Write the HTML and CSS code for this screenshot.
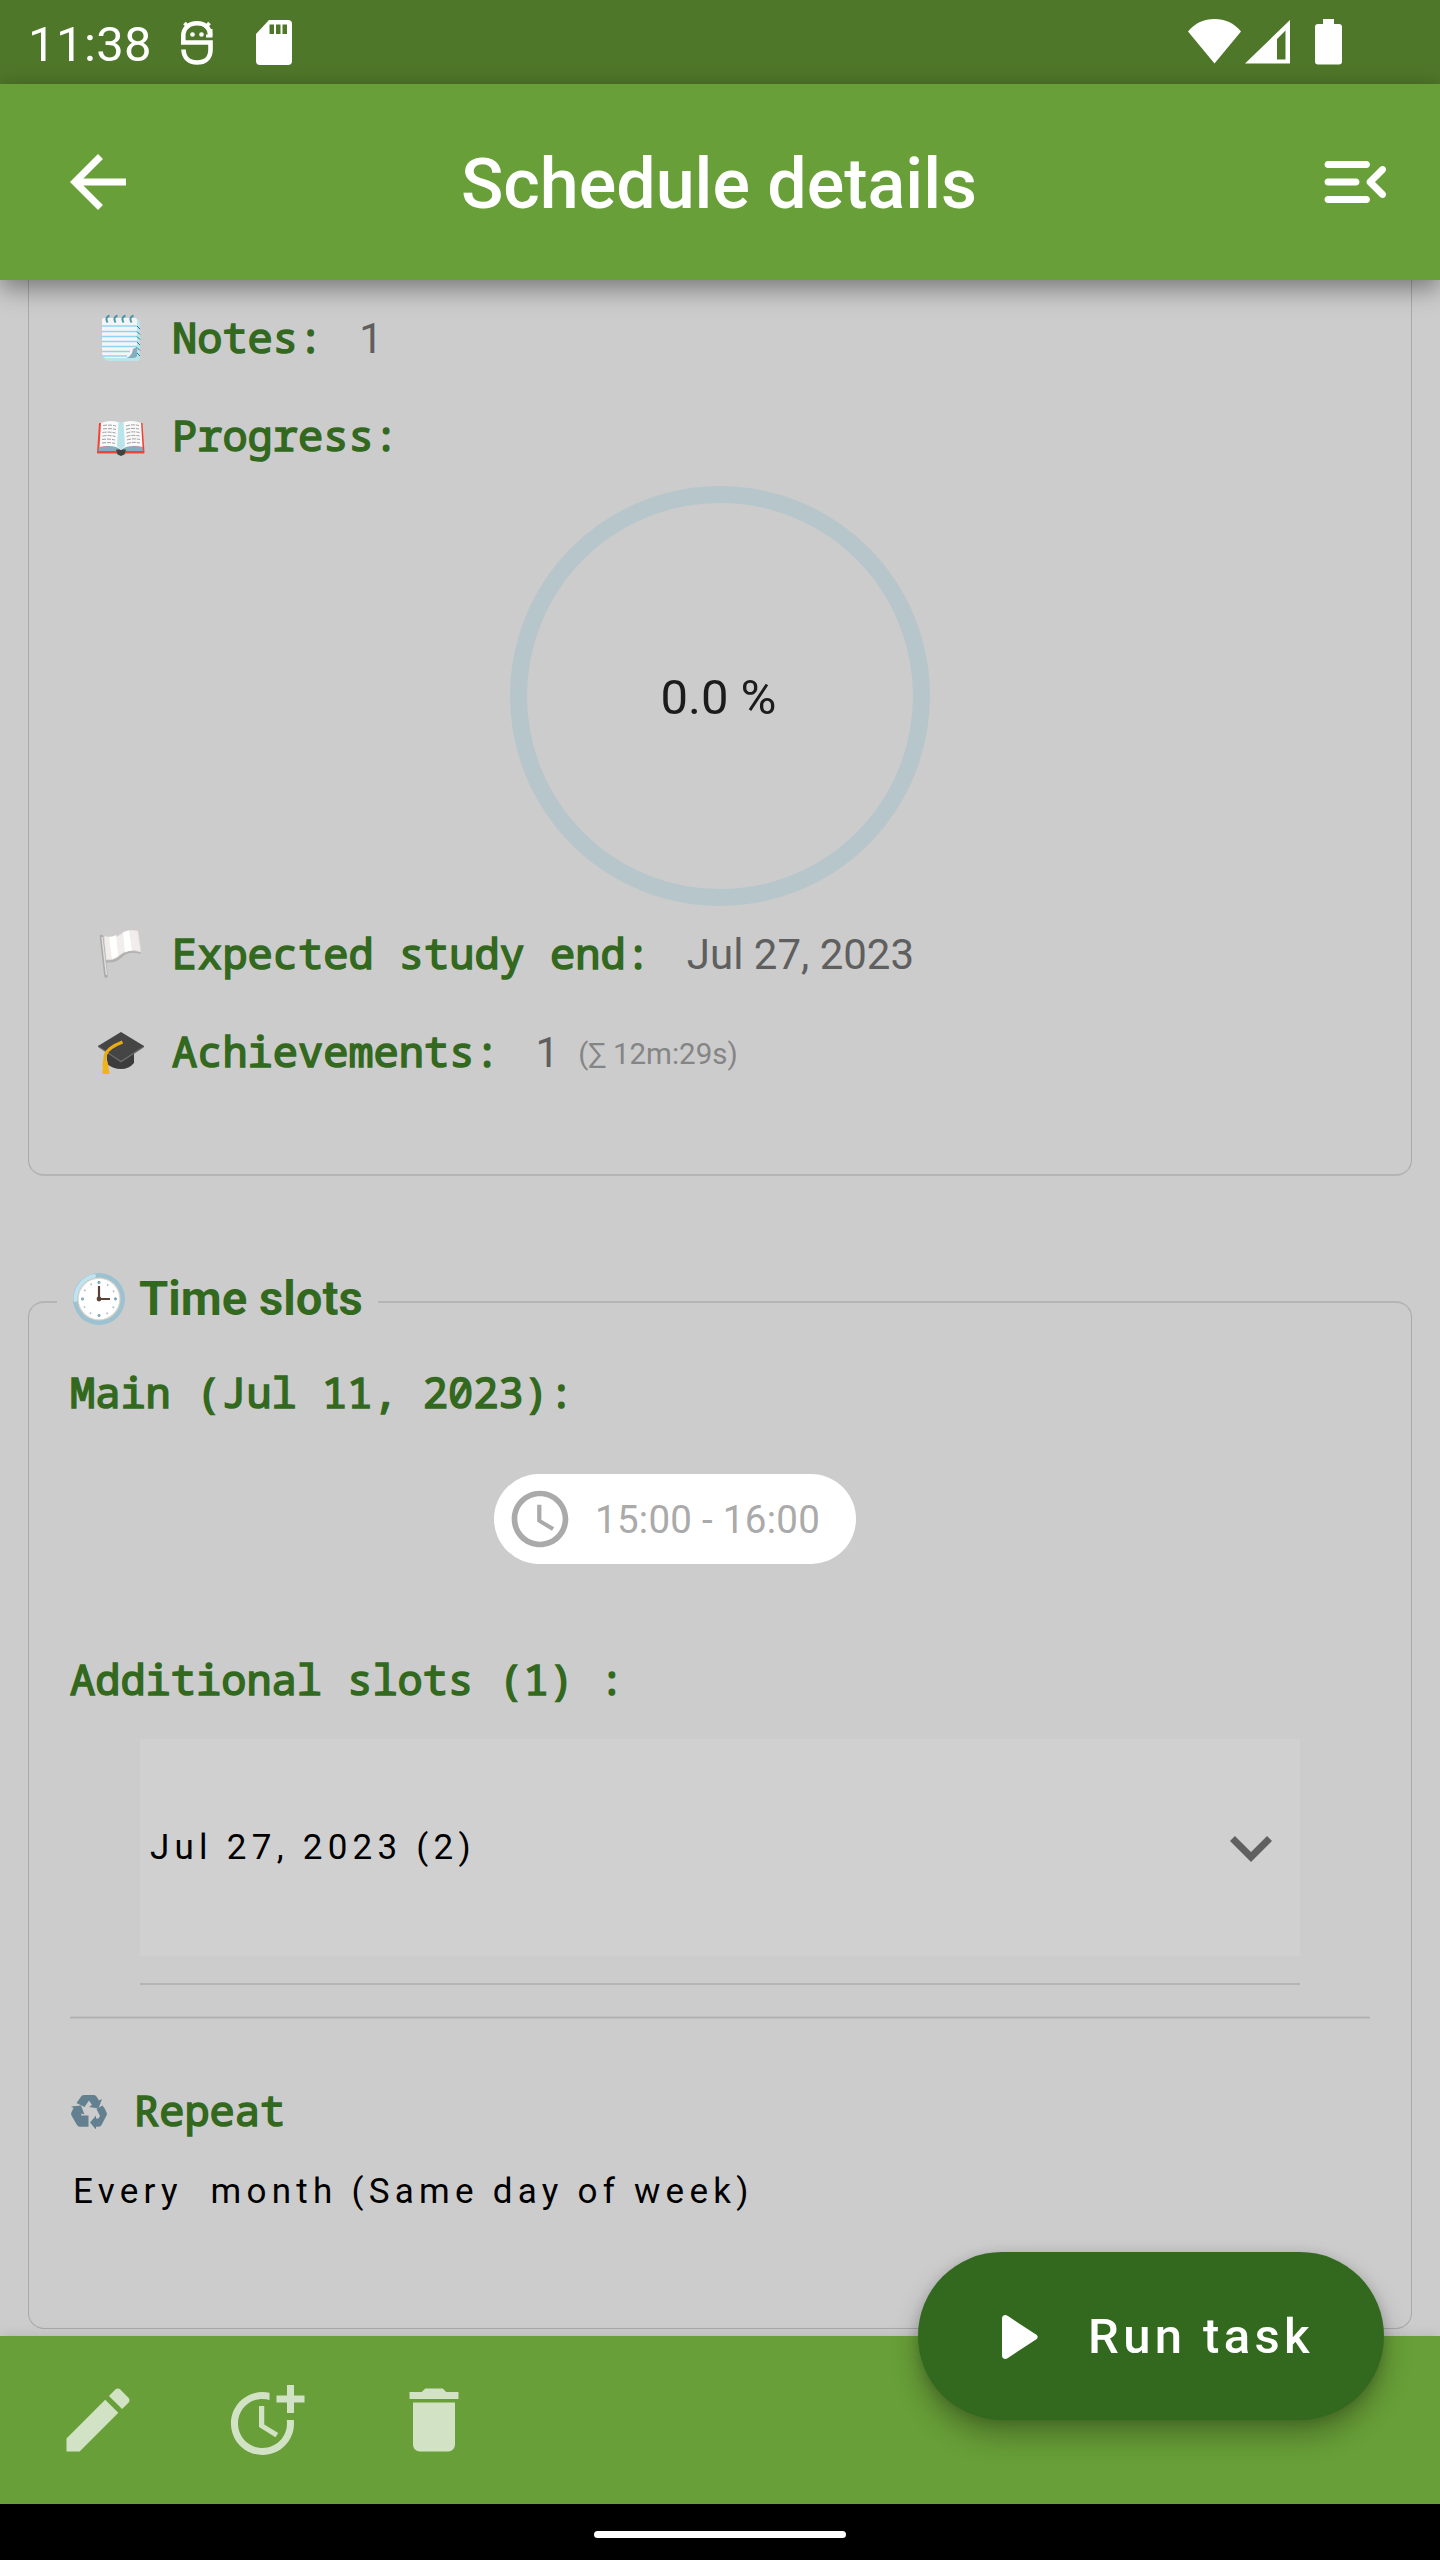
FILE: index.html
```html
<!DOCTYPE html>
<html lang="en">
<head>
<meta charset="utf-8">
<title>Schedule details</title>
<link rel="stylesheet" href="styles.css">
</head>
<body>
<div class="screen">
  <div class="status-bar">
    <span class="clock">11:38</span>
    <svg class="st-debug" width="32" height="46" viewBox="0 0 32 46" fill="none" stroke="#fff" stroke-width="4.600">
      <path d="M2.300 22.500V16C2.300 8 8 3.300 16 3.300S29 8 29.200 15.500M0 22.500H29.500V30C29.500 38 24 42.500 16 42.500S2.800 38 2.500 29.500"/>
      <path d="M3.500 3l4.500 5M28.500 3l-4.500 5" stroke-width="3.600"/><path d="M30 9v7H25" stroke-width="3"/>
      <circle cx="11.500" cy="14.500" r="2.300" fill="#fff" stroke="none"/><circle cx="20.500" cy="14.500" r="2.300" fill="#fff" stroke="none"/>
    </svg>
    <svg class="st-sd" width="36" height="45" viewBox="0 0 36 45">
      <path fill="#fff" fill-rule="evenodd" d="M13 0H32a4 4 0 0 1 4 4V41a4 4 0 0 1-4 4H4a4 4 0 0 1-4-4V14ZM13.500 4.500V14h4.500V4.500ZM20 4.500V14h4.500V4.500ZM26.500 4.500V14H31V4.500Z"/>
    </svg>
    <svg class="st-net" width="156" height="46" viewBox="0 0 156 46" fill="#fff">
      <path d="M0 12.500C7 4 16 0 26.500 0S46 4 53 12.500L26.500 44.500Z"/>
      <path fill-rule="evenodd" d="M102 1V44.500H57ZM97.500 11.500L89 20V40.500h8.500Z"/>
      <path d="M135 0h11v5h5a3 3 0 0 1 3 3v34.500a3 3 0 0 1-3 3h-21a3 3 0 0 1-3-3V8a3 3 0 0 1 3-3h5Z"/>
    </svg>
  </div>

  <header class="app-bar">
    <svg class="icon" viewBox="0 0 24 24"><path d="M20 11H7.830l5.590-5.590L12 4l-8 8 8 8 1.410-1.410L7.830 13H20v-2z"/></svg>
    <h1 class="title">Schedule details</h1>
    <svg class="icon" viewBox="0 0 24 24"><path d="M4 18h11c.55 0 1-.45 1-1s-.45-1-1-1H4c-.55 0-1 .45-1 1s.45 1 1 1zm0-5h8c.55 0 1-.45 1-1s-.45-1-1-1H4c-.55 0-1 .45-1 1s.45 1 1 1zM3 7c0 .55.45 1 1 1h11c.55 0 1-.45 1-1s-.45-1-1-1H4c-.55 0-1 .45-1 1zm17.300 7.880L17.420 12l2.880-2.880c.39-.39.39-1.020 0-1.410-.39-.39-1.020-.39-1.410 0L15.300 11.300c-.39.39-.39 1.020 0 1.410l3.590 3.590c.39.39 1.020.39 1.410 0 .38-.39.39-1.030 0-1.420z"/></svg>
  </header>

  <main class="content">
    <section class="card card-study">
      <div class="field">
        <svg class="emoji" width="50" height="50" viewBox="0 0 50 50">
          <path fill="#b9e4ea" d="M8 5h32q4 0 4 4v35q0 3-3 3H13q-3 0-7-4Z"/>
          <path fill="#f5f5f5" d="M6 6q0-2 2-2h31q2 0 2 2v27l-9 11H12q-6 0-6-5Z"/>
          <path stroke="#90d4f5" stroke-width="1.400" d="M6 12h35M6 17.500h35M6 22.500h35M6 27.500h35M6 32.500h35M6 37.500h28M6 42h25"/>
          <path fill="#82aec0" d="M30 44q6-1 7-9l4-2v9q-1 2-4 2Z"/>
          <path fill="none" stroke="#4796aa" stroke-width="2" d="M13.500 1.500q-5 2-2 7M21.500 1.500q-5 2-2 7M29.500 1.500q-5 2-2 7M37.500 1.500q-5 2-2 7"/>
          <path fill="none" stroke="#2f7889" stroke-width="1" d="M41 12l3 3M41 17.500l3 3M41 22.500l3 3M41 28l3 3M41 33.500l3 3M41 39l3 3"/>
        </svg>
        <span class="label">Notes:</span><span class="value">1</span>
      </div>
      <div class="field">
        <svg class="emoji" width="50" height="50" viewBox="0 0 50 50">
          <path fill="#f44336" d="M3 11L1 40.500q0 1 1 1h19l4 1.500 4-1.500h18.500q1 0 1-1L46.500 11Z"/>
          <path fill="#82aec0" d="M3 35l22-2 21.500 2 .5 4H29q-3 0-4 3-1-3-4-3H2.500Z"/>
          <path fill="#424242" d="M20 37.500h10l-1.500 5-3.500 1.500-3.500-1.500Z"/>
          <path fill="#fafafa" d="M5 11q10-4 20 0 10-4 20 0l1.500 24q-15-3-21.500 3-6-6-21.500-3Z"/>
          <path fill="#b9e4ea" d="M22.500 10l2.500 1 2.500-1 1.500 24-4 4-4-4Z"/>
          <path fill="none" stroke="#9e9e9e" stroke-width="1" stroke-dasharray="4 1" d="M7 13.500q7-1 13 .5M7 17q7-1 13 .5M6.500 20.500q7-1 13 .5M6.500 24q7-1 13 .5M6 27.500q7-1 13 .5M6 31q7-1 13 .5M30 14q6-2 13-.5M30 17.500q6-2 13-.5M30.500 21q6-2 13-.5M30.500 24.500q6-2 13-.5M31 28q6-2 13-.5M31 31.500q6-2 13-.5"/>
        </svg>
        <span class="label">Progress:</span>
      </div>
      <div class="progress-ring">0.0 %</div>
      <div class="field">
        <svg class="emoji" width="50" height="50" viewBox="0 0 50 50">
          <path fill="#b0b0b0" d="M8 30q10 1 16-5 8-7 21-3v2q-13-4-20 4-7 6-17 4Z"/>
          <path fill="#f1eded" stroke="#e2d6d2" stroke-width=".8" d="M8 6q12 3 18-3 8-5 16-2l3 21q-13-4-21 3-6 6-14 4.500Z"/>
          <path fill="#fff" d="M13 7q4 0 7-2l2 21q-3 2-6 3ZM27 2.500q3-1.500 6-2l3 20q-4 0-7 2Z"/>
          <path stroke="#aaa" stroke-width="3.500" stroke-linecap="round" d="M5.500 6.500L10 46"/>
          <path stroke="#dedede" stroke-width="1.500" d="M6 7l4.500 38"/>
        </svg>
        <span class="label">Expected study end:</span><span class="value">Jul 27, 2023</span>
      </div>
      <div class="field">
        <svg class="emoji" width="50" height="50" viewBox="0 0 50 50">
          <path fill="#3c3c3c" d="M11 22v14q6 5 14 5t13-6V22Z"/>
          <path fill="#6b6b6b" d="M2 17.500l23 15 23-15v1.800L25 34.500 2 19Z"/>
          <path fill="#454545" d="M25 4l23 14-23 14.500L2 18Z"/>
          <path fill="none" stroke="#e9ad13" stroke-width="3.200" d="M26.500 14Q11 20 9.500 27L8 38"/>
          <path fill="#f0b31a" d="M7 33h4.500l2 13H6.500Z"/>
        </svg>
        <span class="label">Achievements:</span><span class="value">1</span><span class="note">(∑ 12m:29s)</span>
      </div>
    </section>

    <section class="card card-slots">
      <h2 class="card-title">
        <svg width="52" height="52" viewBox="0 0 52 52">
          <circle cx="26" cy="26" r="26" fill="#9cc2d2"/>
          <path d="M2.500 27A23.500 23.500 0 0 1 21 3" fill="none" stroke="#bfe3f0" stroke-width="4" stroke-linecap="round"/>
          <circle cx="26" cy="26" r="21.500" fill="#ddd5c8"/><circle cx="26" cy="26" r="20.300" fill="#fff"/>
          <g fill="#4f93ac"><circle cx="26" cy="9.500" r="1.400"/><circle cx="42.500" cy="26" r="1.400"/><circle cx="26" cy="42.500" r="1.400"/><circle cx="9.500" cy="26" r="1.400"/></g>
          <circle cx="26" cy="26" r="16.500" fill="none" stroke="#a9bcc4" stroke-width="1.800" stroke-dasharray="1.500 7.140" stroke-dashoffset=".75"/>
          <path d="M26 13v13h11" fill="none" stroke="#5d4037" stroke-width="2.200"/><circle cx="26" cy="26" r="2.400" fill="#5d4037"/>
        </svg>
        <span>Time slots</span>
      </h2>
      <div class="label label-main">Main (Jul 11, 2023):</div>
      <div class="chip">
        <svg width="68" height="68" viewBox="0 0 24 24" fill="#aaa"><path d="M11.990 2C6.470 2 2 6.480 2 12s4.470 10 9.990 10C17.520 22 22 17.520 22 12S17.520 2 11.990 2zM12 20c-4.420 0-8-3.580-8-8s3.580-8 8-8 8 3.580 8 8-3.580 8-8 8zm.5-13H11v6l5.250 3.150.75-1.230-4.500-2.670z"/></svg>
        <span>15:00 - 16:00</span>
      </div>
      <div class="label label-additional">Additional slots (1) :</div>
      <div class="slot-group">
        <span>Jul 27, 2023 (2)</span>
        <svg class="icon" viewBox="0 0 24 24"><path d="M16.590 8.590L12 13.170 7.410 8.590 6 10l6 6 6-6z"/></svg>
      </div>
      <div class="rule rule-inner"></div>
      <div class="rule rule-outer"></div>
      <div class="repeat-head">
        <svg width="36" height="34" viewBox="0 0 36 34" fill="#62808f">
          <path d="M10.500 1Q11.500 0 13 0H23q1.500 0 2.500 1.500L28 5.500l3-1.500-3.500 9.500-9.500-1.500 3-2-3-4.500L13.500 12 5.500 8Z"/>
          <path d="M34 14l1.500 3.500q.8 1.500 0 3L30.500 30q-1 1.700-3 1.700H25V34.500L19 27.500 25 20.500V23.500h2.500L29 21l-3.500-7 6-3.500Z"/>
          <path d="M0 11.500L10 10.500 13.500 19.500 10.500 18.500 10 20.500H17.500v11.200H9q-2.200 0-3.200-2L.5 20.500q-.8-1.800 0-3.200L2.500 13Z"/>
        </svg>
        <span class="label">Repeat</span>
      </div>
      <div class="repeat-text">Every&nbsp; month (Same day of week)</div>
    </section>
  </main>

  <footer class="bottom-bar">
    <svg class="icon" viewBox="0 0 24 24"><path d="M3 17.250V21h3.750L17.810 9.940l-3.750-3.750L3 17.250zM20.710 7.040c.39-.39.39-1.020 0-1.410l-2.340-2.340c-.39-.39-1.020-.39-1.410 0l-1.830 1.830 3.750 3.750 1.830-1.830z"/></svg>
    <svg class="icon" viewBox="0 0 24 24"><path d="M10 8v6l4.700 2.900.8-1.200-4-2.400V8zM17.920 12c.05.33.08.66.08 1 0 3.900-3.100 7-7 7s-7-3.100-7-7 3.100-7 7-7c.7 0 1.370.1 2 .29V4.230c-.64-.15-1.310-.23-2-.23-5 0-9 4-9 9s4 9 9 9 9-4 9-9c0-.34-.02-.67-.06-1zM20 5V2h-2v3h-3v2h3v3h2V7h3V5z"/></svg>
    <svg class="icon" viewBox="0 0 24 24"><path d="M6 19c0 1.100.9 2 2 2h8c1.100 0 2-.9 2-2V7H6v12zM19 4h-3.500l-1-1h-5l-1 1H5v2h14V4z"/></svg>
    <button class="fab">
      <svg width="36" height="44" viewBox="0 0 36 44" fill="#fff"><path d="M0 3.500C0 .5 3 -.8 5.500 .8L34 19.500c2.200 1.500 2.200 3.500 0 5L5.500 43.200C3 44.800 0 43.500 0 40.500Z"/></svg>
      <span>Run task</span>
    </button>
  </footer>
  <div class="nav-bar"><div class="nav-handle"></div></div>
</div>
</body>
</html>
```
FILE: styles.css
```css
* { box-sizing: border-box; }
body { margin: 0; font-family: Roboto, sans-serif; background: #ccc; }
svg { display: block; flex: none; }
.screen { width: 1440px; height: 2560px; display: flex; flex-direction: column; overflow: hidden; background: #ccc; }
.icon { width: 84px; height: 84px; fill: #fff; }

.status-bar { flex: none; height: 84px; display: flex; align-items: flex-start; padding: 0 96px 0 28px; background: #4f772a; color: #fff; position: relative; z-index: 2; }
.clock { width: 153px; font-size: 49px; line-height: 89px; letter-spacing: .4px; }
.st-debug { margin-top: 20px; }
.st-sd { margin: 20px 0 0 43px; }
.st-net { margin: 19px 0 0 auto; }

.app-bar { flex: none; height: 196px; display: flex; align-items: center; justify-content: space-between; padding: 0 42px 0 56px; background: #689f38; position: relative; z-index: 2; box-shadow: 0 8px 24px rgba(0, 0, 0, .42); }
.title { margin: 0; padding: 3px 16px 0 0; font-size: 70px; font-weight: 500; line-height: 84px; color: #fff; }

.content { flex: 1; min-height: 0; padding: 0 28px; display: flex; flex-direction: column; gap: 125px; }
.card { flex: none; border: 1px solid #a9a9a9; }
.card-study { height: 896px; padding-top: 10px; border-top: 0; border-bottom: 2px solid #b5b5b5; border-radius: 0 0 16px 16px; }
.field { height: 98px; display: flex; align-items: baseline; padding-left: 67px; line-height: 94px; white-space: pre; }
.emoji { align-self: center; margin-right: 26px; }
.label { font-family: "Droid Sans Mono", "Noto Sans Mono", "DejaVu Sans Mono", monospace; font-size: 42px; color: #33691e; -webkit-text-stroke: 1.6px #33691e; white-space: pre; }
.value { margin-left: 36px; font-size: 42px; color: #5f5f5f; }
.note { margin-left: 19px; font-size: 29.5px; color: #858585; position: relative; top: -3px; }
.progress-ring { width: 420px; height: 420px; margin: 0 auto; padding: 2px 3px 0 0; border: 17.5px solid #b7c6cb; border-radius: 50%; display: flex; align-items: center; justify-content: center; font-size: 49px; color: #1c1c1c; }

.card-slots { height: 1028px; border-top: 2px solid #b5b5b5; border-radius: 16px; display: flex; flex-direction: column; align-items: flex-start; padding-left: 41px; }
.card-title { margin: -34px 0 0 -13px; width: 321px; height: 60px; padding-left: 16px; display: flex; align-items: center; gap: 14px; background: #ccc; font-size: 47.25px; font-weight: 700; line-height: 60px; color: #33691e; }
.label-main { margin-top: 33px; line-height: 60px; }
.chip { margin: 52px 0 0 424px; width: 362px; height: 90px; border-radius: 45px; background: #fff; display: flex; align-items: center; padding-left: 12px; gap: 21px; font-size: 38.5px; letter-spacing: .28px; color: #aaa; }
.label-additional { margin-top: 85px; line-height: 60px; }
.slot-group { margin: 30px 0 0 70px; width: 1160px; height: 217px; padding: 0 7px 0 10px; background: #d0d0d0; display: flex; align-items: center; justify-content: space-between; font-size: 35px; letter-spacing: 5.25px; color: #000; }
.slot-group .icon { fill: #606060; }
.rule { background: #b5b5b5; }
.rule-inner { margin: 27px 0 0 70px; width: 1160px; height: 2px; }
.rule-outer { margin-top: 31px; width: 1300px; height: 3px; background: linear-gradient(#c2c2c2 33%, #b0b0b0 33% 67%, #c2c2c2 67%); }
.repeat-head { margin: 63px 0 0 1px; height: 60px; line-height: 60px; display: flex; align-items: center; gap: 27px; }
.repeat-head .label { margin-top: -4px; }
.repeat-text { margin: 20px 0 0 3px; line-height: 60px; font-size: 35px; letter-spacing: 5.25px; color: #000; }

.bottom-bar { flex: none; height: 168px; display: flex; align-items: center; gap: 84px; padding: 0 56px; background: #689f38; position: relative; z-index: 2; box-shadow: 0 0 12px rgba(0, 0, 0, .12); }
.bottom-bar .icon { fill: #d2e2c4; }
.fab { position: absolute; right: 56px; top: -84px; width: 466px; height: 168px; border: 0; border-radius: 84px; padding: 1px 0 0 84px; display: flex; align-items: center; gap: 50px; background: #33691e; color: #fff; font: 500 49px Roboto, sans-serif; letter-spacing: 4.375px; box-shadow: 0 16px 28px rgba(0, 0, 0, .28), 0 2px 12px rgba(0, 0, 0, .14); }
.nav-bar { flex: none; height: 56px; display: flex; align-items: center; justify-content: center; background: #000; position: relative; z-index: 3; }
.nav-handle { width: 252px; height: 7px; margin-top: 5px; border-radius: 4px; background: #fff; }
```
